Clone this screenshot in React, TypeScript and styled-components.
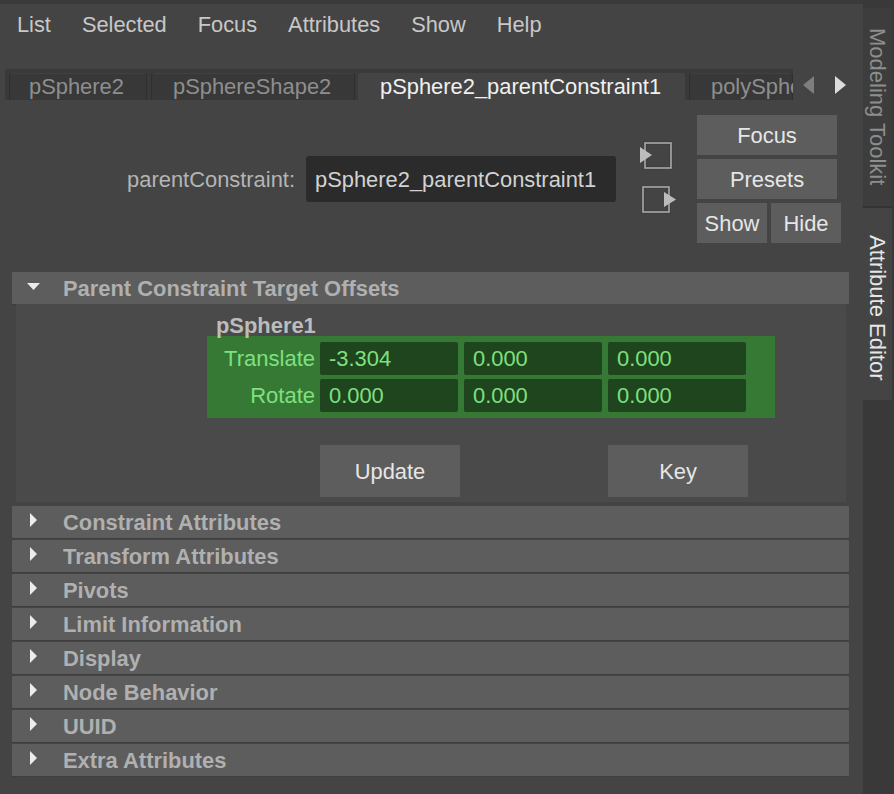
import React from "react";
import styled, { createGlobalStyle } from "styled-components";

const Global = createGlobalStyle`
  html, body { margin: 0; padding: 0; background: #444; }
  body { font-family: "Liberation Sans", Arial, sans-serif; }
  * { box-sizing: border-box; }
`;

const Page = styled.div`
  width: 894px;
  height: 794px;
  overflow: hidden;
  display: flex;
  background: #444;
`;
const Main = styled.div`
  width: 863px;
  display: flex;
  flex-direction: column;
`;
const TopEdge = styled.div`
  height: 4px;
  background: #3a3a3a;
  flex: none;
`;
const MenuBar = styled.div`
  height: 40px;
  padding: 2px 0 0 17px;
  display: flex;
  gap: 31px;
  align-items: center;
`;
const MenuItem = styled.span`
  font-size: 21.8px;
  color: #c8c8c8;
  line-height: 38px;
`;
const TabRow = styled.div`
  height: 31px;
  margin-top: 25px;
  margin-left: 5px;
  display: flex;
  align-items: center;
`;
const TabStrip = styled.div`
  width: 788px;
  height: 31px;
  background: #3a3a3a;
  display: flex;
  align-items: flex-end;
  padding-left: 4px;
  overflow: hidden;
  flex: none;
`;
const Tab = styled.div<{ $active?: boolean; $w: number; $gap: number; $pad: number }>`
  flex: none;
  width: ${(p) => p.$w}px;
  height: 27px;
  margin-right: ${(p) => p.$gap}px;
  padding-left: ${(p) => p.$pad}px;
  font-size: 21.9px;
  line-height: 27px;
  white-space: nowrap;
  overflow: hidden;
  background: ${(p) => (p.$active ? "#444" : "#383838")};
  color: ${(p) => (p.$active ? "#f0f0f0" : "#8e8e8e")};
  border-radius: 2px 2px 0 0;
  box-shadow: ${(p) => (p.$active ? "none" : "inset 1px 0 0 #2f2f2f, inset -1px 0 0 #2f2f2f, inset 0 1px 0 #414141")};
`;
const ArrowBox = styled.div`
  display: flex;
  gap: 21px;
  margin-left: 10px;
  svg { display: block; }
`;
const Header = styled.div`
  height: 162px;
  display: flex;
  align-items: flex-start;
`;
const NameBlock = styled.div`
  display: flex;
  align-items: flex-start;
  margin-top: 56px;
  width: 616px;
  justify-content: flex-end;
`;
const NameLabel = styled.span`
  font-size: 21.9px;
  line-height: 48px;
  color: #b4b4b4;
  margin-right: 11px;
`;
const NameField = styled.div`
  width: 310px;
  height: 46px;
  background: #2b2b2b;
  border-radius: 3px;
  padding-left: 9px;
  font-size: 21.9px;
  line-height: 48px;
  color: #d2d2d2;
`;
const IconStack = styled.div`
  width: 81px;
  padding: 41px 0 0 24px;
  display: flex;
  flex-direction: column;
  gap: 15px;
  svg { display: block; }
`;
const ButtonStack = styled.div`
  margin-top: 15px;
  display: flex;
  flex-direction: column;
  gap: 4px;
`;
const ToolButton = styled.div<{ $w: number }>`
  width: ${(p) => p.$w}px;
  height: 40px;
  background: #5d5d5d;
  color: #e6e6e6;
  font-size: 21.9px;
  line-height: 42px;
  text-align: center;
`;
const ButtonPair = styled.div`
  display: flex;
  gap: 4px;
`;
const Sections = styled.div`
  margin-top: 10px;
  padding: 0 14px 0 12px;
  display: flex;
  flex-direction: column;
`;
const SectionHead = styled.div<{ $gap?: number }>`
  height: 32px;
  background: #5d5d5d;
  border-radius: 1px;
  display: flex;
  align-items: center;
  margin-bottom: ${(p) => p.$gap ?? 2}px;
  position: relative;
  padding: 2px 0 0 51px;
  font-size: 21.9px;
  font-weight: 700;
  color: #b0b0b0;
  box-shadow: 0 1px 0 #3e3e3e;
`;
const Caret = styled.svg`
  position: absolute;
  left: 14px;
  top: 0;
`;
const Body = styled.div`
  margin: 0 3px 4px 4px;
  height: 198px;
  background: #4a4a4a;
  position: relative;
  padding: 10px 0 0 191px;
`;
const TargetName = styled.div`
  padding-left: 9px;
  height: 22px;
  line-height: 24px;
  font-size: 21.9px;
  font-weight: 700;
  color: #bcbcbc;
`;
const Green = styled.div`
  width: 568px;
  height: 82px;
  background: #357935;
  padding-top: 6px;
  display: flex;
  flex-direction: column;
  gap: 4px;
`;
const GreenRow = styled.div`
  display: flex;
  align-items: center;
`;
const GreenLabel = styled.span`
  width: 108px;
  text-align: right;
  font-size: 22px;
  color: #7fe07f;
  margin-right: 5px;
`;
const GreenField = styled.div`
  width: 138px;
  height: 33px;
  margin-right: 6px;
  background: #1e451e;
  border-radius: 2px;
  padding-left: 9px;
  font-size: 21.9px;
  line-height: 33px;
  color: #7fe07f;
`;
const BodyActions = styled.div`
  display: flex;
  gap: 148px;
  margin: 27px 0 0 113px;
`;
const BodyButton = styled.div`
  width: 140px;
  height: 52px;
  background: #5d5d5d;
  color: #e6e6e6;
  font-size: 21.9px;
  line-height: 54px;
  text-align: center;
`;
const Rail = styled.div`
  width: 31px;
  padding-top: 8px;
  background: #393939;
  display: flex;
  flex-direction: column;
  flex: none;
`;
const RailTab = styled.div<{ $active?: boolean; $h: number; $pt: number }>`
  width: 29px;
  height: ${(p) => p.$h}px;
  padding-top: ${(p) => p.$pt}px;
  background: ${(p) => (p.$active ? "#444" : "#3d3d3d")};
  color: ${(p) => (p.$active ? "#e6e6e6" : "#8e8e8e")};
  writing-mode: vertical-rl;
  font-size: 22px;
  line-height: 29px;
  white-space: nowrap;
  box-shadow: ${(p) => (p.$active ? "none" : "inset 0 -2px 0 #333")};
`;

const collapsed = [
  "Constraint Attributes",
  "Transform Attributes",
  "Pivots",
  "Limit Information",
  "Display",
  "Node Behavior",
  "UUID",
  "Extra Attributes",
];

const rows = [
  { label: "Translate", values: ["-3.304", "0.000", "0.000"] },
  { label: "Rotate", values: ["0.000", "0.000", "0.000"] },
];

function CaretRight() {
  return (
    <Caret width="14" height="28" viewBox="0 0 14 28">
      <path d="M4 7 L11 14 L4 21 Z" fill="#ececec" />
    </Caret>
  );
}
function CaretDown() {
  return (
    <Caret width="18" height="28" viewBox="0 0 18 28">
      <path d="M1 11 H14 L7.5 18 Z" fill="#ececec" />
    </Caret>
  );
}
function InIcon() {
  return (
    <svg width="34" height="30" viewBox="0 0 34 30">
      <rect x="5" y="2" width="26" height="25" fill="none" stroke="#3a3a3a" strokeWidth="3" />
      <rect x="5" y="2" width="26" height="25" fill="none" stroke="#aaaaaa" strokeWidth="1.6" />
      <path d="M0 6 L12 14 L0 22 Z" fill="#bcbcbc" />
    </svg>
  );
}
function OutIcon() {
  return (
    <svg width="36" height="30" viewBox="0 0 36 30">
      <rect x="3" y="1" width="26" height="25" fill="none" stroke="#3a3a3a" strokeWidth="3" />
      <rect x="3" y="1" width="26" height="25" fill="none" stroke="#aaaaaa" strokeWidth="1.6" />
      <path d="M24 6 L36 13.5 L24 21 Z" fill="#bcbcbc" />
    </svg>
  );
}

export default function App() {
  return (
    <Page>
      <Global />
      <Main>
        <TopEdge />
        <MenuBar>
          {["List", "Selected", "Focus", "Attributes", "Show", "Help"].map((m) => (
            <MenuItem key={m}>{m}</MenuItem>
          ))}
        </MenuBar>
        <TabRow>
          <TabStrip>
            <Tab $w={138} $gap={4} $pad={20}>pSphere2</Tab>
            <Tab $w={204} $gap={3} $pad={22}>pSphereShape2</Tab>
            <Tab $active $w={327} $gap={4} $pad={22}>pSphere2_parentConstraint1</Tab>
            <Tab $w={104} $gap={0} $pad={22}>polySphere1</Tab>
          </TabStrip>
          <ArrowBox>
            <svg width="11" height="18" viewBox="0 0 11 18"><path d="M11 0 V18 L0 9 Z" fill="#7e7e7e" /></svg>
            <svg width="11" height="18" viewBox="0 0 11 18"><path d="M0 0 V18 L11 9 Z" fill="#dcdcdc" /></svg>
          </ArrowBox>
        </TabRow>
        <Header>
          <NameBlock>
            <NameLabel>parentConstraint:</NameLabel>
            <NameField>pSphere2_parentConstraint1</NameField>
          </NameBlock>
          <IconStack>
            <InIcon />
            <OutIcon />
          </IconStack>
          <ButtonStack>
            <ToolButton $w={140}>Focus</ToolButton>
            <ToolButton $w={140}>Presets</ToolButton>
            <ButtonPair>
              <ToolButton $w={70}>Show</ToolButton>
              <ToolButton $w={70}>Hide</ToolButton>
            </ButtonPair>
          </ButtonStack>
        </Header>
        <Sections>
          <SectionHead $gap={0}>
            <CaretDown />
            Parent Constraint Target Offsets
          </SectionHead>
          <Body>
            <TargetName>pSphere1</TargetName>
            <Green>
              {rows.map((r) => (
                <GreenRow key={r.label}>
                  <GreenLabel>{r.label}</GreenLabel>
                  {r.values.map((v, i) => (
                    <GreenField key={i}>{v}</GreenField>
                  ))}
                </GreenRow>
              ))}
            </Green>
            <BodyActions>
              <BodyButton>Update</BodyButton>
              <BodyButton>Key</BodyButton>
            </BodyActions>
          </Body>
          {collapsed.map((c) => (
            <SectionHead key={c}>
              <CaretRight />
              {c}
            </SectionHead>
          ))}
        </Sections>
      </Main>
      <Rail>
        <RailTab $h={200} $pt={20}>Modeling Toolkit</RailTab>
        <RailTab $active $h={192} $pt={27}>Attribute Editor</RailTab>
      </Rail>
    </Page>
  );
}
